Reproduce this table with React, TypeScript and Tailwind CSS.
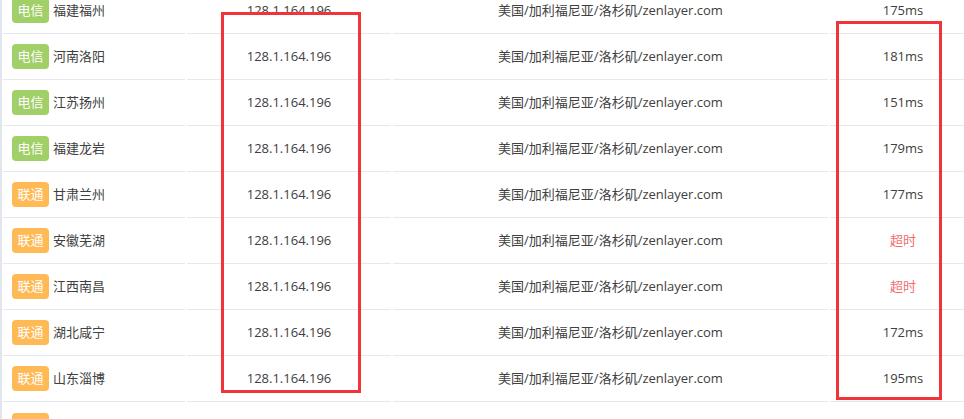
import React from 'react';

type Row = {
  isp: '电信' | '联通';
  city: string;
  ms: number | null;
};

const rows: Row[] = [
  { isp: '电信', city: '福建福州', ms: 175 },
  { isp: '电信', city: '河南洛阳', ms: 181 },
  { isp: '电信', city: '江苏扬州', ms: 151 },
  { isp: '电信', city: '福建龙岩', ms: 179 },
  { isp: '联通', city: '甘肃兰州', ms: 177 },
  { isp: '联通', city: '安徽芜湖', ms: null },
  { isp: '联通', city: '江西南昌', ms: null },
  { isp: '联通', city: '湖北咸宁', ms: 172 },
  { isp: '联通', city: '山东淄博', ms: 195 },
];

const IP = '128.1.164.196';
const LOCATION = '美国/加利福尼亚/洛杉矶/zenlayer.com';

const IspBadge: React.FC<{ isp?: Row['isp']; green?: boolean }> = ({ isp, green }) => (
  <span
    className={`inline-flex items-center justify-center h-[25px] w-[37px] rounded-[4px] text-white text-[13px] leading-none ${
      green ? 'bg-[#a1cf68]' : 'bg-[#ffb955]'
    }`}
  >
    {isp}
  </span>
);

export default function App() {
  return (
    <div className="relative w-[964px] h-[419px] overflow-hidden bg-white font-['Open_Sans','Noto_Sans_CJK_SC',sans-serif] text-[13px] text-[#404040]">
      <div className="-mt-[12px] w-[980px] border-l-2 border-[#e0e6ec] pl-px">
        {rows.map((row, i) => (
          <div key={i} className="flex gap-[2px] h-[46px]">
            <div className="w-[182px] flex items-center gap-[4px] pl-[9px] border-b border-[#e3e9ef]">
              <IspBadge isp={row.isp} green={row.isp === '电信'} />
              <span>{row.city}</span>
            </div>
            <div className="w-[204px] flex items-center justify-center border-b border-[#e3e9ef]">
              {IP}
            </div>
            <div className="w-[435px] flex items-center justify-center border-b border-[#e3e9ef]">
              {LOCATION}
            </div>
            <div className="w-[146px] flex items-center justify-center border-b border-[#e3e9ef]">
              {row.ms === null ? (
                <span className="text-[#f56c6c]">超时</span>
              ) : (
                `${row.ms}ms`
              )}
            </div>
          </div>
        ))}
        {/* next row, mostly below the fold */}
        <div className="flex h-[46px]">
          <div className="w-[182px] flex items-center pl-[9px]">
            <IspBadge />
          </div>
        </div>
      </div>

      {/* annotation boxes */}
      <div className="absolute left-[221px] top-[12px] w-[140px] h-[381px] border-[3px] border-[#f0343a]" />
      <div className="absolute left-[836px] top-[21px] w-[106px] h-[379px] border-[3px] border-[#f0343a]" />
    </div>
  );
}
